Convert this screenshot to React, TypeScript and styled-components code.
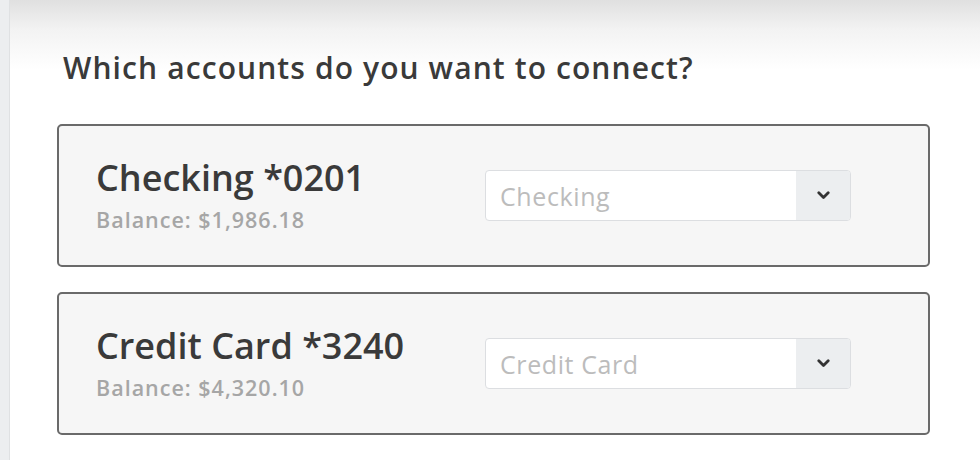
import React from 'react'
import styled, { createGlobalStyle } from 'styled-components'

interface Account {
  name: string
  balance: string
  type: string
}

const accounts: Account[] = [
  { name: 'Checking *0201', balance: '$1,986.18', type: 'Checking' },
  { name: 'Credit Card *3240', balance: '$4,320.10', type: 'Credit Card' },
]

const Chevron = () => (
  <svg width="13" height="9" viewBox="0 0 13 9" fill="none">
    <polyline points="1.8,1.8 6.5,6.5 11.2,1.8" stroke="#333" strokeWidth="2.8" strokeLinecap="round" strokeLinejoin="round" />
  </svg>
)

const AccountSelect = ({ placeholder }: { placeholder: string }) => (
  <Select>
    <SelectValue>{placeholder}</SelectValue>
    <SelectButton>
      <Chevron />
    </SelectButton>
  </Select>
)

const App = () => {
  return (
    <>
      <GlobalStyle />
      <Page>
        <SideStrip />
        <Panel>
          <Heading>Which accounts do you want to connect?</Heading>
          <CardList>
            {accounts.map((a) => (
              <Card key={a.name}>
                <Info>
                  <AccountName>{a.name}</AccountName>
                  <Balance>Balance: {a.balance}</Balance>
                </Info>
                <AccountSelect placeholder={a.type} />
              </Card>
            ))}
            <Card muted />
          </CardList>
        </Panel>
      </Page>
    </>
  )
}

export default App

const GlobalStyle = createGlobalStyle`
  html, body {
    margin: 0;
    padding: 0;
    height: 460px;
    overflow: hidden;
    background: #eef0f1;
  }
  body {
    font-family: "Open Sans", Lato, "Liberation Sans", sans-serif;
  }
`

const Page = styled('div')`
  display: flex;
  width: 980px;
  height: 460px;
  overflow: hidden;
`

const SideStrip = styled('div')`
  width: 9px;
  flex-shrink: 0;
  background: #eceef0;
  border-right: 1px solid #dfe1e3;
`

const Panel = styled('div')`
  flex: 1;
  background: linear-gradient(to bottom, #e0e0e0 0px, #f3f3f3 30px, #ffffff 70px);
  padding: 48px 50px 0 47px;
`

const Heading = styled('h1')`
  margin: 0 0 0 6px;
  font-size: 30px;
  line-height: 40px;
  font-weight: 600;
  color: #3a3a3a;
  letter-spacing: 1.1px;
  white-space: nowrap;
`

const CardList = styled('div')`
  display: flex;
  flex-direction: column;
  gap: 25px;
  margin-top: 36px;
`

const Card = styled('div')<{ muted?: boolean }>`
  display: grid;
  grid-template-columns: 389px 366px;
  align-items: center;
  box-sizing: border-box;
  height: 143px;
  padding-left: 37px;
  background: #f6f6f6;
  border: 2px solid ${(p) => (p.muted ? '#d8d8d8' : '#6a6a6a')};
  border-radius: 5px;
  flex-shrink: 0;
`

const Info = styled('div')`
  display: flex;
  flex-direction: column;
  gap: 9px;
`

const AccountName = styled('div')`
  font-size: 36px;
  line-height: 40px;
  font-weight: 600;
  color: #3a3a3a;
  white-space: nowrap;
`

const Balance = styled('div')`
  font-size: 21.5px;
  line-height: 26px;
  font-weight: 600;
  color: #a6a6a6;
  letter-spacing: 1px;
  white-space: nowrap;
`

const Select = styled('div')`
  display: flex;
  box-sizing: border-box;
  height: 51px;
  border: 1px solid #dcdee1;
  border-radius: 4px;
  background: #ffffff;
  overflow: hidden;
`

const SelectValue = styled('div')`
  flex: 1;
  display: flex;
  align-items: center;
  padding-left: 14px;
  font-size: 25px;
  letter-spacing: 0.6px;
  color: #bcbcbc;
`

const SelectButton = styled('div')`
  width: 54px;
  display: flex;
  align-items: center;
  justify-content: center;
  background: #eceef0;
`
